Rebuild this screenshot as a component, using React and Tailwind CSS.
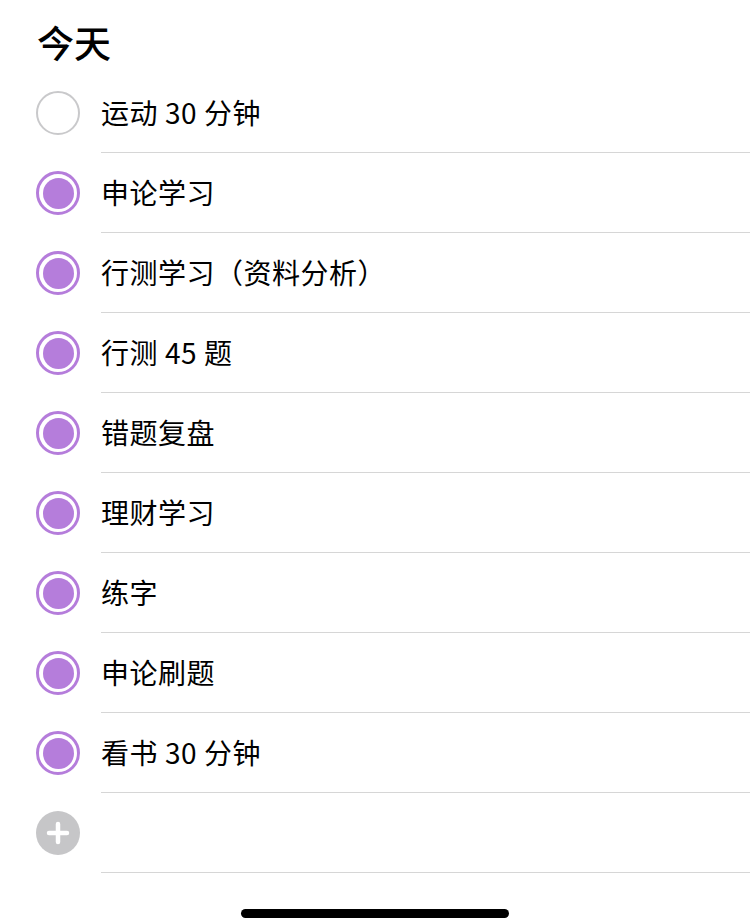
const tasks = [
  { title: '运动30分钟', done: false },
  { title: '申论学习', done: true },
  { title: '行测学习（资料分析）', done: true },
  { title: '行测45题', done: true },
  { title: '错题复盘', done: true },
  { title: '理财学习', done: true },
  { title: '练字', done: true },
  { title: '申论刷题', done: true },
  { title: '看书30分钟', done: true },
];

const font = { fontFamily: '"Noto Sans CJK SC", "Noto Sans", sans-serif' };

// iOS puts a little space between CJK and latin digits
const Title = ({ text }) =>
  text.split(/(\d+)/).map((part, i) =>
    /^\d+$/.test(part) ? (
      <span key={i} className="mx-[7px]">{part}</span>
    ) : (
      <span key={i}>{part}</span>
    )
  );

const Check = ({ done }) =>
  done ? (
    <div className="w-[44px] h-[44px] rounded-full border-[3px] border-[#b57ddb] flex items-center justify-center shrink-0">
      <div className="w-[31px] h-[31px] rounded-full bg-[#b57ddb]"></div>
    </div>
  ) : (
    <div className="w-[44px] h-[44px] rounded-full border-[2.5px] border-[#c9c9cb] shrink-0"></div>
  );

const App = () => {
  return (
    <div className="w-[750px] h-[924px] bg-white relative overflow-hidden" style={font}>
      <h1 className="pl-[37px] pt-[16px] h-[73px] text-[37px] leading-[52px] font-medium text-black">
        今天
      </h1>

      <ul>
        {tasks.map((task) => (
          <li key={task.title} className="flex items-stretch h-[80px]">
            <div className="w-[101px] flex items-center pl-[36px]">
              <Check done={task.done} />
            </div>
            <div className="flex-1 flex items-center border-b border-[#d6d6d6] pb-[2px]">
              <span className="text-[28px] text-black tracking-[0.5px]">
                <Title text={task.title} />
              </span>
            </div>
          </li>
        ))}
        <li className="flex items-stretch h-[80px]">
          <div className="w-[101px] flex items-center pl-[36px]">
            <div className="w-[44px] h-[44px] rounded-full bg-[#c6c6c8] flex items-center justify-center">
              <svg width="26" height="26" viewBox="0 0 26 26">
                <path d="M13 4v18M4 13h18" stroke="white" strokeWidth="4.5" strokeLinecap="round" />
              </svg>
            </div>
          </div>
          <div className="flex-1 border-b border-[#d6d6d6]"></div>
        </li>
      </ul>

      <div className="absolute left-[241px] top-[909px] w-[268px] h-[9px] rounded-full bg-black"></div>
    </div>
  );
};

export default App;
